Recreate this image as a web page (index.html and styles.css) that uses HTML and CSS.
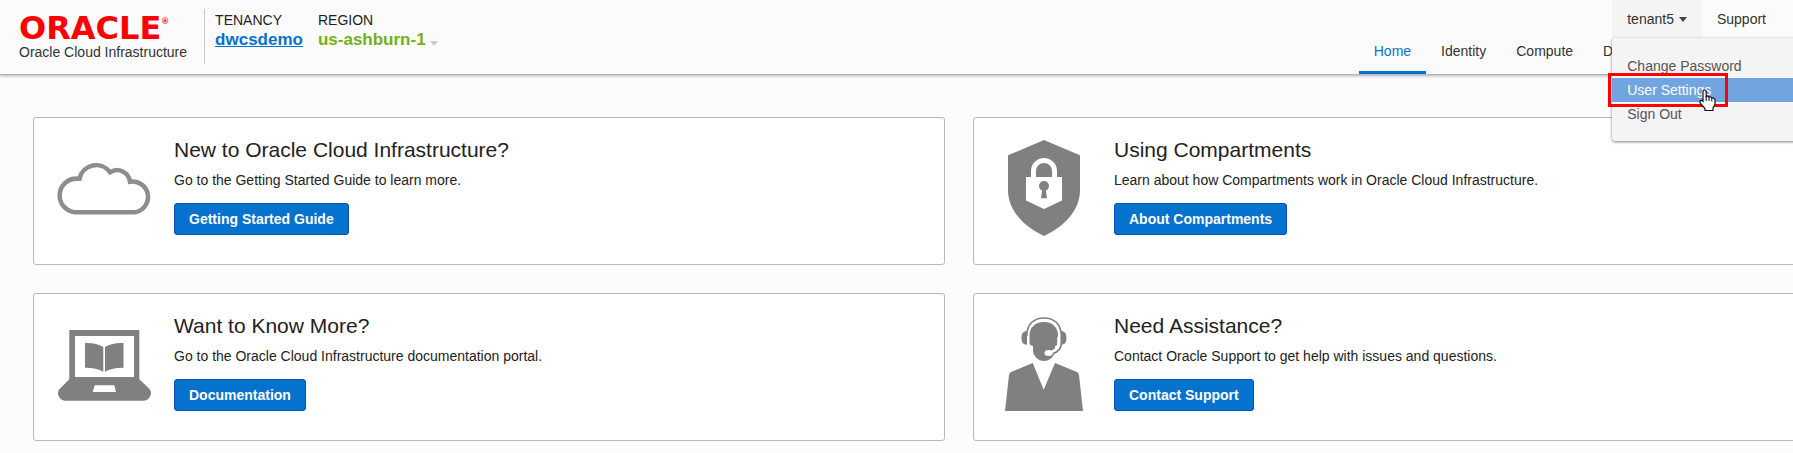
FILE: index.html
```html
<!DOCTYPE html>
<html lang="en">
<head>
<meta charset="utf-8">
<meta name="viewport" content="width=device-width, initial-scale=1">
<title>Oracle Cloud Infrastructure</title>
<link rel="stylesheet" href="styles.css">
</head>
<body>
<header class="header">
  <div class="brand">
    <div class="wordmark">ORACLE<span class="registered">®</span></div>
    <div class="product">Oracle Cloud Infrastructure</div>
  </div>
  <div class="context">
    <div class="context-item">
      <span class="context-label">TENANCY</span>
      <a class="tenancy" href="#">dwcsdemo</a>
    </div>
    <div class="context-item">
      <span class="context-label">REGION</span>
      <button class="region" type="button">us-ashburn-1<span class="caret caret-light"></span></button>
    </div>
  </div>
  <div class="header-end">
    <div class="utilities">
      <div class="account">
        <button class="utility utility-open" type="button" aria-haspopup="true" aria-expanded="true">tenant5<span class="caret"></span></button>
        <div class="menu">
          <a class="menu-item" href="#">Change Password</a>
          <a class="menu-item menu-item-active" href="#">User Settings<span class="highlight"></span><svg class="pointer" viewBox="0 0 17 22" aria-hidden="true"><path d="M5.500 1C6.500 1 7.200 1.700 7.200 2.700V7.500C8 6.800 9.600 7 10 8.200C11 7.600 12.300 8 12.700 9.100C14.300 8.600 16 9.400 16 11V15.500L14 19V21.500H6V19.500L1.300 14.200C.3 12.800 1 11 2.800 11.400L4 12.400V2.700C4 1.700 4.600 1 5.500 1Z" fill="#fff" stroke="#111" stroke-width="1.200"/><path d="M7.200 7V12M10 8.500V12M12.800 9.500V12.500" fill="none" stroke="#111"/></svg></a>
          <a class="menu-item" href="#">Sign Out</a>
        </div>
      </div>
      <a class="utility" href="#">Support</a>
    </div>
    <nav class="nav">
      <a class="nav-link nav-link-current" href="#">Home</a>
      <a class="nav-link" href="#">Identity</a>
      <a class="nav-link" href="#">Compute</a>
      <a class="nav-link" href="#">Database</a>
    </nav>
  </div>
</header>
<main class="cards">
  <section class="card">
    <svg class="card-icon" viewBox="0 0 96 96" aria-hidden="true"><path d="M19 72.300A16.800 16.800 0 0 1 22 38.700H23.500A17 17 0 0 1 54 32.300A13 13 0 0 1 74 41.700A15.300 15.300 0 1 1 79 72.300Z" fill="none" stroke="#8c8d8e" stroke-width="4.500"/></svg>
    <div class="card-body">
      <h2 class="card-title">New to Oracle Cloud Infrastructure?</h2>
      <p class="card-text">Go to the Getting Started Guide to learn more.</p>
      <button class="button" type="button">Getting Started Guide</button>
    </div>
  </section>
  <section class="card">
    <svg class="card-icon" viewBox="0 0 96 96" aria-hidden="true"><path d="M48 0L84 15.300V50C84 70 69 86 48 96C27 86 12 70 12 50V15.300Z" fill="#808080"/><path d="M37.500 40V31A10.500 10.500 0 0 1 58.500 31V40" fill="none" stroke="#fff" stroke-width="5"/><path d="M30 37H66V60.500L48 69L30 60.500Z" fill="#fff"/><circle cx="48" cy="46" r="5" fill="#808080"/><path d="M46.500 48H49.500L51 58.300H45Z" fill="#808080"/></svg>
    <div class="card-body">
      <h2 class="card-title">Using Compartments</h2>
      <p class="card-text">Learn about how Compartments work in Oracle Cloud Infrastructure.</p>
      <button class="button" type="button">About Compartments</button>
    </div>
  </section>
  <section class="card">
    <svg class="card-icon" viewBox="0 0 96 96" aria-hidden="true"><g fill="#808080"><path fill-rule="evenodd" d="M13.300 14H83.300V63.300L93.500 73C97 77 94 84.700 87.500 84.700H9.500C3 84.700 0 77 3.500 73L13.300 63.300ZM19 20V61H78V20ZM38.700 69.300L36.700 76H60L58.300 69.300Z"/><path d="M29 27Q40 26.500 47.300 31V55.700Q40 51.500 29 51.700ZM67.500 27Q56.500 26.500 49 31V55.700Q56.500 51.500 67.500 51.700Z"/></g></svg>
    <div class="card-body">
      <h2 class="card-title">Want to Know More?</h2>
      <p class="card-text">Go to the Oracle Cloud Infrastructure documentation portal.</p>
      <button class="button" type="button">Documentation</button>
    </div>
  </section>
  <section class="card">
    <svg class="card-icon" viewBox="0 0 96 96" aria-hidden="true"><g fill="#808080"><path d="M48 6C57 6 62 12 62 19V28C62 29.500 60.500 29.500 59 30V34C59 40 54 45 48 45C42 45 37 40 37 34V30C35 29.500 33.500 29 33.500 27V19C33.500 12 39 6 48 6Z"/><path d="M9 95L13 59Q13.200 57 15 56L36.700 47L47.700 73.700L59 47L81 56Q82.800 57 83 59L87 95Z"/><path d="M31 15V28.500C27 29 25.500 26 25.500 22C25.500 18 27 15 31 15ZM65 15V28.500C69 29 70.500 26 70.500 22C70.500 18 69 15 65 15Z"/></g><path d="M63 21V26C63 32 60 36 53 37" fill="none" stroke="#fff" stroke-width="3.500"/><path d="M30.700 20C30.700 8 38 2 48 2C58 2 65.300 8 65.300 20V27C65.300 32 62 36 57 37.500" fill="none" stroke="#808080" stroke-width="1.700"/><ellipse cx="52.500" cy="37" rx="4" ry="3" fill="#fff"/></svg>
    <div class="card-body">
      <h2 class="card-title">Need Assistance?</h2>
      <p class="card-text">Contact Oracle Support to get help with issues and questions.</p>
      <button class="button" type="button">Contact Support</button>
    </div>
  </section>
</main>
</body>
</html>
```
FILE: styles.css
```css
* {
  box-sizing: border-box;
}

body {
  margin: 0;
  overflow-x: hidden;
  background: #fcfcfc;
  color: #222;
  font: 14px/18px "Liberation Sans", Arial, sans-serif;
}

a {
  color: inherit;
  text-decoration: none;
}

button {
  border: 0;
  padding: 0;
  background: none;
  color: inherit;
  font: inherit;
  cursor: pointer;
}

.header {
  display: flex;
  position: relative;
  z-index: 1;
  border-bottom: 1px solid #b0b5c4;
  background: #fbfbfb;
  box-shadow: 0 1px 3px rgba(0, 0, 0, 0.3);
}

.brand {
  margin: 9px 17px 10px 0;
  padding: 4px 0 3px 19px;
}

.wordmark {
  display: flex;
  color: #f00;
  font: bold 32px/30px "DejaVu Sans", sans-serif;
}

.registered {
  font-size: 8px;
  line-height: 18px;
}

.product {
  color: #333;
}

.context {
  display: flex;
  gap: 15px;
  margin: 9px 0 10px;
  border-left: 1px solid #c8cbd3;
  padding-left: 10px;
}

.context-item {
  display: flex;
  flex-direction: column;
  align-items: flex-start;
  padding-top: 2px;
}

.tenancy,
.region {
  font-size: 17px;
  font-weight: bold;
  line-height: 22px;
}

.tenancy {
  color: #0572ce;
  text-decoration: underline;
}

.region {
  color: #74b01c;
}

.caret {
  display: inline-block;
  margin-left: 5px;
  border: 4px solid transparent;
  border-top: 5px solid #444;
  border-bottom: 0;
  vertical-align: 2px;
}

.caret-light {
  margin-left: 4px;
  border-top-color: #c8ccd4;
  vertical-align: -1px;
}

.header-end {
  display: flex;
  flex-direction: column;
  justify-content: space-between;
  margin-left: auto;
}

.utilities {
  display: flex;
  justify-content: flex-end;
  padding-right: 12px;
}

.account {
  position: relative;
  z-index: 2;
}

.utility {
  display: block;
  padding: 10px 15px;
  color: #333;
}

.utility-open {
  background: #f4f4f4;
}

.menu {
  position: absolute;
  top: 100%;
  left: 0;
  width: 200px;
  border-radius: 3px;
  padding: 16px 0 15px;
  background: #f4f4f4;
  box-shadow: 0 1px 3px rgba(0, 0, 0, 0.5);
}

.menu-item {
  display: block;
  position: relative;
  padding: 0 15px;
  color: #555;
  line-height: 24px;
}

.menu-item-active {
  z-index: 1;
  background: #72a4e0;
  color: #fff;
}

.highlight {
  position: absolute;
  top: -5px;
  left: -4px;
  width: 120px;
  height: 34px;
  border: 3px solid #f00;
}

.pointer {
  position: absolute;
  top: 11px;
  left: 87px;
  width: 17px;
  height: 22px;
}

.nav {
  display: flex;
  padding-right: 115px;
}

.nav-link {
  border-bottom: 3px solid transparent;
  padding: 0 15px 11px;
  color: #333;
}

.nav-link-current {
  border-color: #0572ce;
  color: #0572ce;
}

.cards {
  display: grid;
  grid-template-columns: repeat(2, minmax(912px, 1fr));
  gap: 28px;
  padding: 42px 33px 12px;
}

.card {
  display: flex;
  gap: 22px;
  border: 1px solid #b5b9c6;
  border-radius: 3px;
  padding: 22px 22px 28px;
  background: #fff;
}

.card-icon {
  flex: none;
  width: 96px;
  height: 96px;
}

.card-title {
  margin: 0 0 11px;
  font-size: 21px;
  font-weight: normal;
  line-height: 20px;
}

.card-text {
  margin: 0 0 14px;
}

.button {
  border: 1px solid #0a50b8;
  border-radius: 3px;
  padding: 6px 14px;
  background: #0572ce;
  color: #fff;
  font-weight: bold;
}
```
